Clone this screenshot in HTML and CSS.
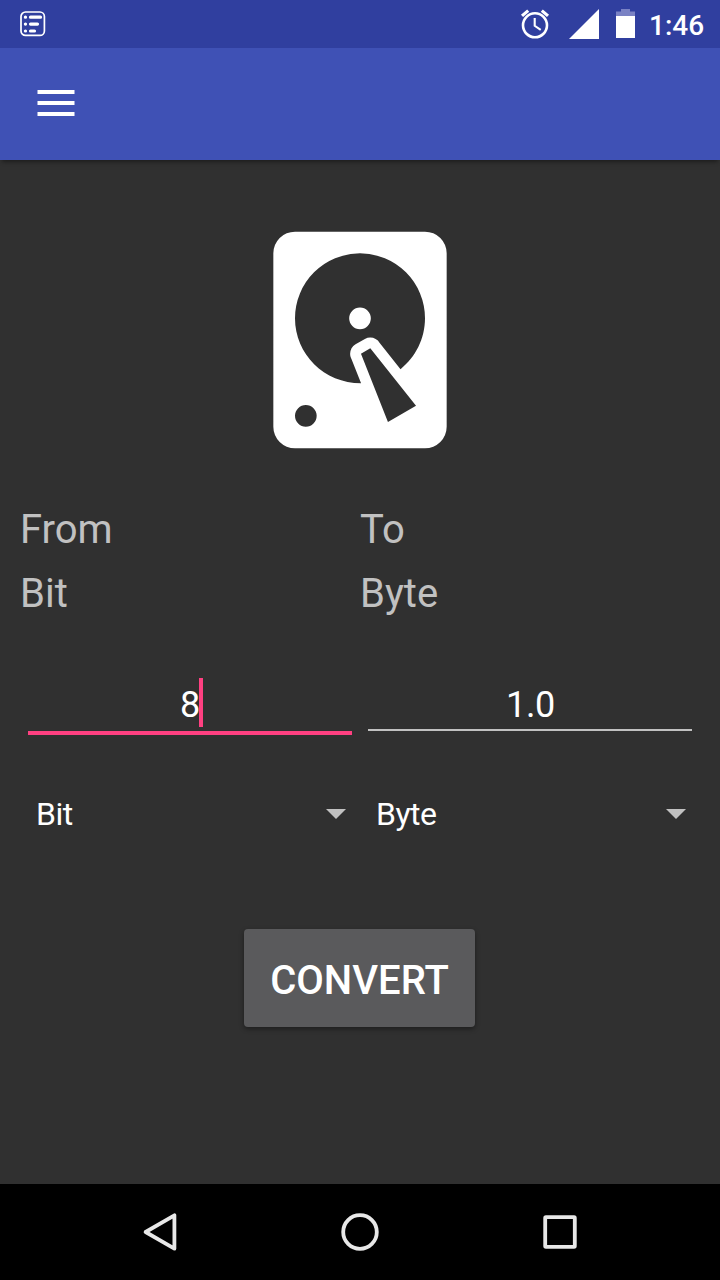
FILE: index.html
```html
<!DOCTYPE html>
<html lang="en">
<head>
<meta charset="utf-8">
<title>Converter</title>
<link rel="stylesheet" href="styles.css">
</head>
<body>
<div class="screen">
  <header class="status-bar">
    <svg class="status-note" width="26" height="26" viewBox="0 0 26 26" fill="none" stroke="#fff">
      <rect x="1" y="1" width="23.4" height="23.4" rx="4.5" stroke-width="1.7"/>
      <path d="M10.5 6.2h10M10.5 13.1h7M10.5 20h4" stroke-width="3.2" stroke-linecap="round"/>
      <path d="M5.4 6.2h.1M5.4 13.1h.1M5.4 20h.1" stroke-width="3.2" stroke-linecap="round"/>
    </svg>
    <div class="status-right">
      <svg class="alarm" width="30" height="30" viewBox="0 0 30 30" fill="none" stroke="#fff">
        <circle cx="15" cy="16.3" r="12" stroke-width="2.6"/>
        <path d="M14.7 9v7.8l6 4" stroke-width="2.1"/>
        <path d="M2 6.9l6.2-5.3M28 6.9l-6.2-5.3" stroke-width="3.2"/>
      </svg>
      <svg class="signal" width="30" height="30" viewBox="0 0 30 30"><path d="M0 30L30 0V30z" fill="#fff"/></svg>
      <svg class="battery" width="19" height="29" viewBox="0 0 19 29">
        <path d="M0 7V2.5h5V0h9v2.5h5V7z" fill="#7a82c4"/>
        <path d="M0 7h19v22H0z" fill="#fff"/>
      </svg>
      <span class="clock">1:46</span>
    </div>
  </header>
  <nav class="app-bar">
    <button class="menu" aria-label="Menu"><i></i><i></i><i></i></button>
  </nav>
  <main class="content">
    <svg class="disk" width="260" height="260" viewBox="0 0 24 24" fill="#fff">
      <path d="M6,2H18A2,2 0 0,1 20,4V20A2,2 0 0,1 18,22H6A2,2 0 0,1 4,20V4A2,2 0 0,1 6,2M12,4A6,6 0 0,0 6,10C6,13.31 8.69,16 12.1,16L11.22,13.77C10.95,13.29 11.11,12.68 11.59,12.4L12.45,11.9C12.93,11.63 13.54,11.79 13.82,12.27L15.74,14.69C17.12,13.59 18,11.9 18,10A6,6 0 0,0 12,4M12,9A1,1 0 0,1 13,10A1,1 0 0,1 12,11A1,1 0 0,1 11,10A1,1 0 0,1 12,9M7,18A1,1 0 0,0 6,19A1,1 0 0,0 7,20A1,1 0 0,0 8,19A1,1 0 0,0 7,18M12.09,13.27L14.58,19.58L17.17,18.08L12.95,12.77L12.09,13.27Z"/>
    </svg>
    <div class="columns labels">
      <div><p>From</p><p>Bit</p></div>
      <div><p>To</p><p>Byte</p></div>
    </div>
    <div class="columns fields">
      <div class="field focused"><span class="value">8</span><span class="caret"></span></div>
      <div class="field result"><span class="value">1.0</span></div>
    </div>
    <div class="columns spinners">
      <div class="spinner"><span>Bit</span><svg width="20" height="10" viewBox="0 0 20 10"><path d="M0 0h20L10 10z" fill="#c1c1c1"/></svg></div>
      <div class="spinner"><span>Byte</span><svg width="20" height="10" viewBox="0 0 20 10"><path d="M0 0h20L10 10z" fill="#c1c1c1"/></svg></div>
    </div>
    <button class="convert">CONVERT</button>
  </main>
  <footer class="nav-bar">
    <svg width="40" height="40" viewBox="0 0 40 40"><path d="M5.6 20L34.4 3.3v33.4z"/></svg>
    <svg width="40" height="40" viewBox="0 0 40 40"><circle cx="20" cy="20" r="16.8"/></svg>
    <svg width="40" height="40" viewBox="0 0 40 40"><rect x="5.2" y="5.2" width="29.6" height="29.6" rx=".8"/></svg>
  </footer>
</div>
</body>
</html>
```
FILE: styles.css
```css
* { box-sizing: border-box; }
body { margin: 0; font-family: Roboto, "Liberation Sans", sans-serif; }
p { margin: 0; }
button { border: 0; padding: 0; font-family: inherit; color: inherit; }
svg { display: block; flex: none; }

.screen {
  display: flex;
  flex-direction: column;
  width: 720px;
  height: 1280px;
  overflow: hidden;
  background: #303030;
  color: #fff;
}

.status-bar {
  display: flex;
  justify-content: space-between;
  height: 48px;
  padding: 0 16px 0 20px;
  background: #303f9f;
}
.status-note { margin-top: 11px; }
.status-right { display: flex; align-items: flex-start; }
.alarm { margin-top: 9px; }
.signal { margin: 9px 0 0 19px; }
.battery { margin: 9px 0 0 17px; }
.clock {
  width: 55px;
  margin-left: 14px;
  font-size: 28px;
  font-weight: 500;
  line-height: 52px;
  white-space: nowrap;
}

.app-bar {
  flex: none;
  height: 112px;
  padding: 42px 37px;
  background: #3f51b5;
  box-shadow: 0 4px 4px -2px rgba(0, 0, 0, .4);
}
.menu {
  display: flex;
  flex-direction: column;
  gap: 7px;
  width: 38px;
  background: none;
}
.menu i {
  width: 38px;
  height: 4px;
  border: solid rgba(255, 255, 255, .5);
  border-width: 0 1px;
  background: #fff;
  background-clip: padding-box;
}

.content {
  display: flex;
  flex: 1;
  flex-direction: column;
  align-items: center;
  padding: 50px 20px 0;
}
.columns { display: grid; grid-template-columns: 340px 340px; }

.labels {
  margin-top: 28px;
  color: #c1c1c1;
  font-size: 40px;
  line-height: 64px;
}

.fields { margin-top: 52px; }
.field {
  display: flex;
  justify-content: center;
  height: 53px;
  margin: 0 8px;
  border-bottom: 2px solid #c1c1c1;
  font-size: 36px;
  line-height: 54px;
}
.focused {
  height: 57px;
  border-bottom: 4px solid #ff4081;
}
.caret { width: 4px; height: 49px; margin: 0 -3px 0 -1px; background: #ff4081; }
.result { padding-left: 1px; letter-spacing: -.3px; }

.spinners { margin-top: 54px; }
.spinner {
  display: flex;
  align-items: center;
  justify-content: space-between;
  height: 50px;
  padding: 0 14px 0 16px;
  font-size: 32px;
  line-height: 50px;
  letter-spacing: -.5px;
}

.convert {
  width: 231px;
  height: 98px;
  margin: 90px 1px 0 0;
  padding-top: 4px;
  border-radius: 4px;
  background: #5a5a5c;
  box-shadow: 0 2px 5px rgba(0, 0, 0, .4);
  font-size: 40px;
  font-weight: 500;
}

.nav-bar {
  display: flex;
  align-items: center;
  justify-content: center;
  gap: 160px;
  height: 96px;
  background: #000;
}
.nav-bar svg {
  fill: none;
  stroke: #e8e8e8;
  stroke-width: 3.8;
  stroke-linejoin: round;
}
```
